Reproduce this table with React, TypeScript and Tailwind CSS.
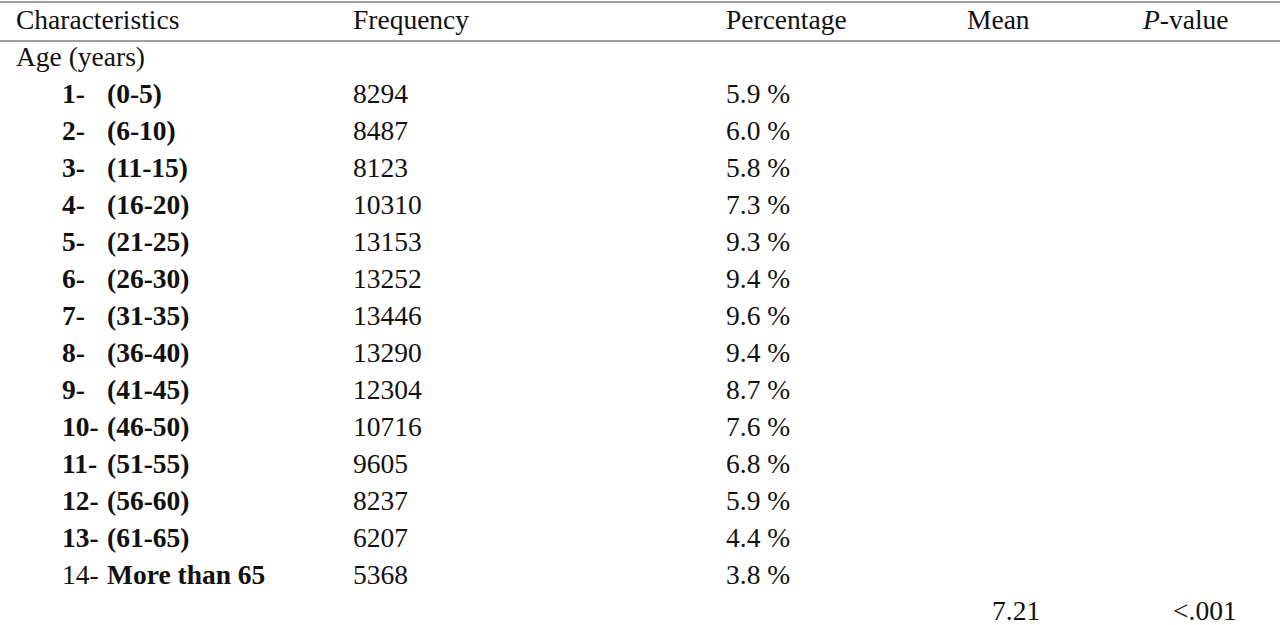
const rows: [string, string, string, string][] = [
  ["1-", "(0-5)", "8294", "5.9 %"],
  ["2-", "(6-10)", "8487", "6.0 %"],
  ["3-", "(11-15)", "8123", "5.8 %"],
  ["4-", "(16-20)", "10310", "7.3 %"],
  ["5-", "(21-25)", "13153", "9.3 %"],
  ["6-", "(26-30)", "13252", "9.4 %"],
  ["7-", "(31-35)", "13446", "9.6 %"],
  ["8-", "(36-40)", "13290", "9.4 %"],
  ["9-", "(41-45)", "12304", "8.7 %"],
  ["10-", "(46-50)", "10716", "7.6 %"],
  ["11-", "(51-55)", "9605", "6.8 %"],
  ["12-", "(56-60)", "8237", "5.9 %"],
  ["13-", "(61-65)", "6207", "4.4 %"],
];

const cols = "grid grid-cols-[353px_373px_241px_176px_1fr] items-center";

export default function App() {
  return (
    <div className="w-[1280px] h-[625px] bg-white text-[#111] text-[27.5px] leading-none overflow-hidden font-['Liberation_Serif','Times_New_Roman',serif]">
      <div className="mt-[1px] border-t-2 border-b-2 border-[#a0a0a0]">
        <div className={`${cols} h-[37px] pb-[4px]`}>
          <div className="pl-4">Characteristics</div>
          <div>Frequency</div>
          <div>Percentage</div>
          <div>Mean</div>
          <div>
            <i>P</i>-value
          </div>
        </div>
      </div>

      <div className={`${cols} h-[33px] pb-[4px]`}>
        <div className="pl-4">Age (years)</div>
      </div>

      {rows.map(([n, range, freq, pct]) => (
        <div key={n} className={`${cols} h-[37px]`}>
          <div className="pl-[62px] flex font-bold">
            <span className="w-[45px]">{n}</span>
            <span>{range}</span>
          </div>
          <div>{freq}</div>
          <div>{pct}</div>
          <div />
          <div />
        </div>
      ))}

      <div className={`${cols} h-[37px]`}>
        <div className="pl-[62px] flex">
          <span className="w-[45px]">14-</span>
          <span className="font-bold">More than 65</span>
        </div>
        <div>5368</div>
        <div>3.8 %</div>
        <div />
        <div />
      </div>

      <div className={`${cols} h-[32px] pt-[3px]`}>
        <div />
        <div />
        <div />
        <div className="pl-[25px]">7.21</div>
        <div className="pl-[30px]">&lt;.001</div>
      </div>
    </div>
  );
}
